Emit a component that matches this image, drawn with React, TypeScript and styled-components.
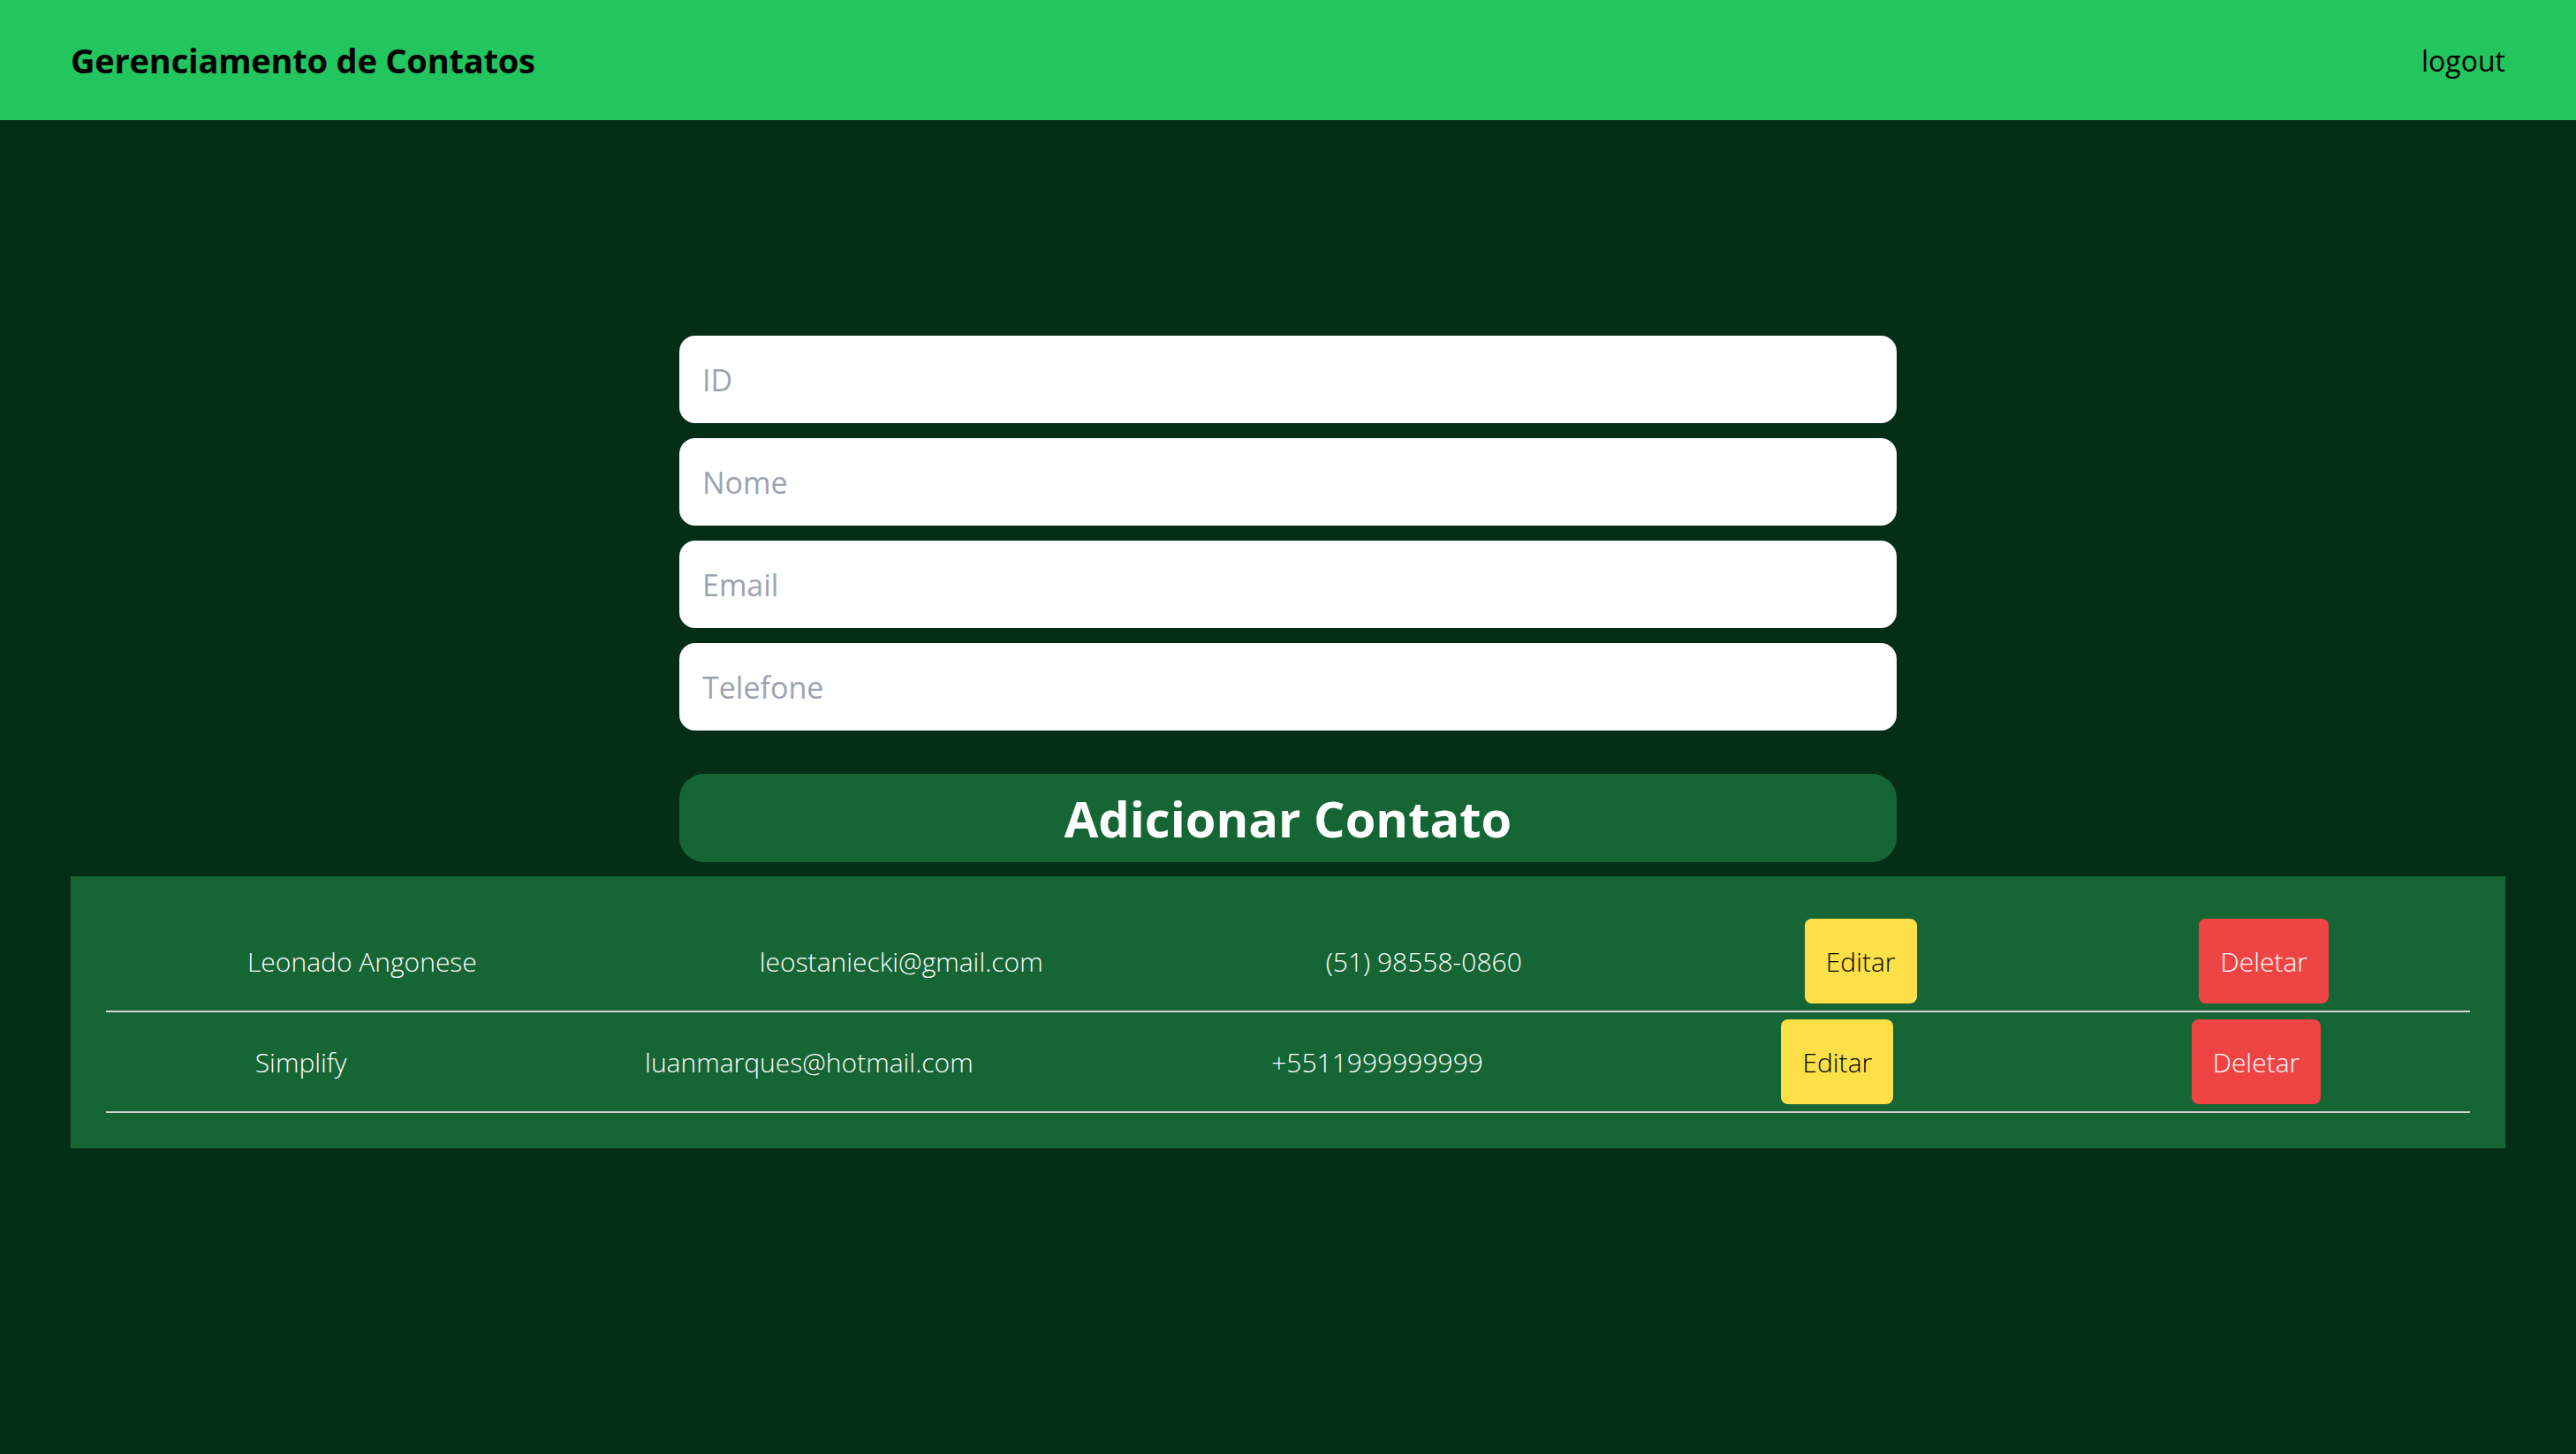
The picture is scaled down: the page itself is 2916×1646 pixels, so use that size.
import React from "react";
import styled, { createGlobalStyle } from "styled-components";

const GlobalStyle = createGlobalStyle`
  html, body {
    margin: 0;
    padding: 0;
    background: #052e16;
    font-family: "Open Sans", "Noto Sans", "Liberation Sans", sans-serif;
  }
  * { box-sizing: border-box; }
`;

const Page = styled.div`
  min-height: 100vh;
  background: #052e16;
  display: flex;
  flex-direction: column;
`;

const Header = styled.header`
  height: 136px;
  background: #22c55e;
  display: flex;
  align-items: center;
  justify-content: space-between;
  padding: 0 80px;
`;

const Title = styled.h1`
  margin: 0;
  font-size: 38px;
  font-weight: 700;
  color: #000;
  letter-spacing: -0.2px;
`;

const Logout = styled.button`
  background: none;
  border: none;
  padding: 0;
  font-family: inherit;
  font-size: 32px;
  font-weight: 400;
  color: #000;
  cursor: pointer;
`;

const Main = styled.main`
  display: flex;
  flex-direction: column;
  align-items: center;
  padding: 244px 80px 0;
`;

const Form = styled.form`
  width: 1378px;
  display: flex;
  flex-direction: column;
  gap: 17px;
`;

const Input = styled.input`
  height: 99px;
  width: 100%;
  border: none;
  border-radius: 18px;
  background: #fff;
  padding: 0 26px;
  font-family: inherit;
  font-size: 34px;
  color: #111827;
  outline: none;
  &::placeholder {
    color: #9ca3af;
  }
`;

const SubmitButton = styled.button`
  margin-top: 32px;
  height: 100px;
  width: 100%;
  border: none;
  border-radius: 28px;
  background: #166534;
  color: #fff;
  font-family: inherit;
  font-size: 56px;
  font-weight: 700;
  cursor: pointer;
`;

const Panel = styled.section`
  align-self: stretch;
  margin-top: 16px;
  background: #166534;
  padding: 40px;
  display: flex;
  flex-direction: column;
`;

const Row = styled.div`
  display: flex;
  align-items: center;
  justify-content: space-around;
  padding: 8px 0;
  border-bottom: 2px solid #d4d4d4;
`;

const Cell = styled.span`
  color: #fff;
  font-size: 30px;
  font-weight: 300;
`;

const ActionButton = styled.button<{ $variant: "edit" | "delete" }>`
  height: 96px;
  padding: 0 24px;
  border: none;
  border-radius: 8px;
  font-family: inherit;
  font-size: 30px;
  font-weight: 300;
  cursor: pointer;
  background: ${(p) => (p.$variant === "edit" ? "#fde047" : "#ef4444")};
  color: ${(p) => (p.$variant === "edit" ? "#000" : "#fff")};
`;

const contacts = [
  { name: "Leonado Angonese", email: "leostaniecki@gmail.com", phone: "(51) 98558-0860" },
  { name: "Simplify", email: "luanmarques@hotmail.com", phone: "+5511999999999" },
];

export default function App() {
  return (
    <Page>
      <GlobalStyle />
      <Header>
        <Title>Gerenciamento de Contatos</Title>
        <Logout>logout</Logout>
      </Header>
      <Main>
        <Form onSubmit={(e) => e.preventDefault()}>
          <Input placeholder="ID" />
          <Input placeholder="Nome" />
          <Input placeholder="Email" />
          <Input placeholder="Telefone" />
          <SubmitButton type="submit">Adicionar Contato</SubmitButton>
        </Form>
        <Panel>
          {contacts.map((c) => (
            <Row key={c.email}>
              <Cell>{c.name}</Cell>
              <Cell>{c.email}</Cell>
              <Cell>{c.phone}</Cell>
              <ActionButton $variant="edit">Editar</ActionButton>
              <ActionButton $variant="delete">Deletar</ActionButton>
            </Row>
          ))}
        </Panel>
      </Main>
    </Page>
  );
}
